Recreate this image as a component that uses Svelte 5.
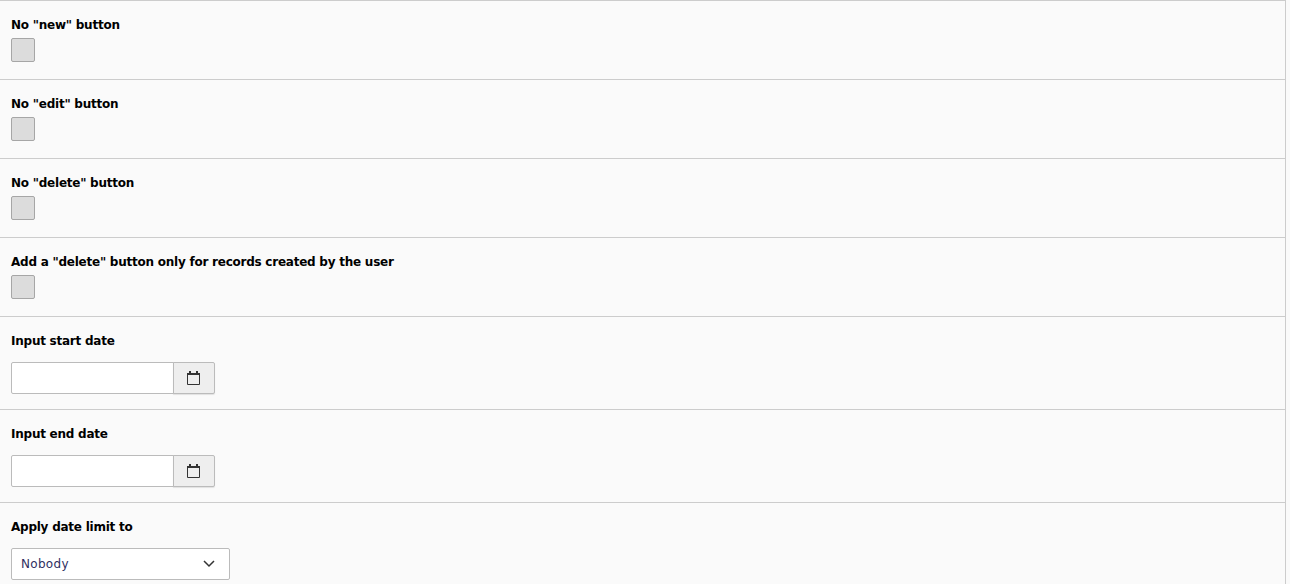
<script>
  const checks = ['No "new" button', 'No "edit" button', 'No "delete" button', 'Add a "delete" button only for records created by the user'];
  const dates = ['Input start date', 'Input end date'];
</script>

{#snippet calendar()}
  <svg width="13" height="14" viewBox="0 0 13 14" fill="none" stroke="#333">
    <path d="M.5 3.5h12v10H.5z" />
    <path d="M0 3h13" stroke-width="2" />
    <path d="M3 0v3M10 0v3" stroke-width="2" />
  </svg>
{/snippet}

<main class="form">
  {#each checks as label}
    <section class="row check-row">
      <div class="label">{label}</div>
      <div class="checkbox"></div>
    </section>
  {/each}
  {#each dates as label}
    <section class="row date-row">
      <div class="label">{label}</div>
      <div class="date">
        <input type="text" />
        <button type="button">{@render calendar()}</button>
      </div>
    </section>
  {/each}
  <section class="row select-row">
    <div class="label">Apply date limit to</div>
    <div class="select">
      <span>Nobody</span>
      <svg width="12" height="8" viewBox="0 0 12 8" fill="none" stroke="#333" stroke-width="1.5"><path d="M1 1l5 5 5-5" /></svg>
    </div>
  </section>
</main>

<style>
  :global(body) {
    margin: 0;
    background: #fafafa;
    font-family: "DejaVu Sans", Verdana, sans-serif;
    overflow: hidden;
  }
  .form {
    width: 1285px;
    height: 584px;
    border-right: 1px solid #ccc;
    overflow: hidden;
  }
  .row {
    border-top: 1px solid #ccc;
    padding: 17px 11px 0;
    box-sizing: border-box;
  }
  .check-row { height: 79px; }
  .date-row { height: 93px; }
  .label {
    font-size: 12px;
    font-weight: 700;
    line-height: 15px;
    letter-spacing: -0.24px;
    color: #000;
  }
  .checkbox {
    width: 24px;
    height: 24px;
    margin-top: 5px;
    box-sizing: border-box;
    background: #dcdcdc;
    border: 1px solid #a6a6a6;
    border-radius: 2px;
  }
  .date {
    display: flex;
    width: 204px;
    height: 32px;
    margin-top: 13px;
  }
  .date input {
    width: 163px;
    height: 32px;
    box-sizing: border-box;
    margin: 0;
    padding: 0;
    background: #fff;
    border: 1px solid #bbb;
    border-radius: 2px 0 0 2px;
  }
  .date button {
    width: 42px;
    height: 32px;
    margin: 0 0 0 -1px;
    padding: 0 1px 0 0;
    display: flex;
    align-items: center;
    justify-content: center;
    background: #eee;
    border: 1px solid #bbb;
    border-radius: 0 2px 2px 0;
    box-shadow: 0 1px 1px rgba(0, 0, 0, 0.1);
  }
  .select {
    display: flex;
    align-items: center;
    justify-content: space-between;
    width: 219px;
    height: 32px;
    margin-top: 13px;
    padding: 0 14px 0 9px;
    box-sizing: border-box;
    background: #fff;
    border: 1px solid #bbb;
    border-radius: 2px;
    font-size: 12px;
    letter-spacing: 0.3px;
    color: #2f2f5f;
  }
</style>
